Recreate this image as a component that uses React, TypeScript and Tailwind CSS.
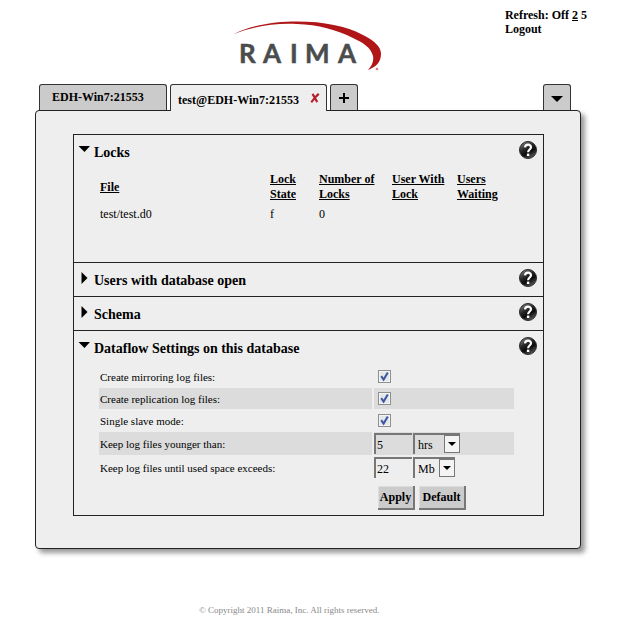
import { useState, type ReactNode } from "react";

function Logo() {
  return (
    <svg width="150" height="52" viewBox="0 0 150 52" role="img" aria-label="Raima">
      <path
        d="M1 14.500C22 4 45 1.500 65 1.500C92 1.500 114 6 131 15C143 21 149 27 149 34C149 42 144 47 136 50C140 46 142 41 141 36C139 28 132 23 121 18C105 10 86 4.500 65 4C42 3 22 6 1 14.500Z"
        fill="#b01518"
      />
      <circle cx="145" cy="49" r="1.300" fill="#d98080" />
      <g
        fill="#4a4c4e"
        stroke="#4a4c4e"
        strokeWidth="0.500"
        fontFamily="Lato, sans-serif"
        fontWeight="700"
        fontSize="26"
      >
        <text x="7" y="43">R</text>
        <text x="31" y="43">A</text>
        <text x="58" y="43">I</text>
        <text x="73" y="43">M</text>
        <text x="106" y="43">A</text>
      </g>
    </svg>
  );
}

function HelpIcon() {
  return (
    <svg width="18" height="18" viewBox="0 0 18 18" aria-hidden="true">
      <defs>
        <linearGradient id="ball" x1="0" y1="0" x2="0.600" y2="1">
          <stop offset="0" stopColor="#999" />
          <stop offset="0.450" stopColor="#2a2a2a" />
          <stop offset="0.700" stopColor="#0a0a0a" />
          <stop offset="1" stopColor="#555" />
        </linearGradient>
      </defs>
      <circle cx="9" cy="9" r="8.500" fill="url(#ball)" stroke="#2a2a2a" />
      <path d="M6 6.400C6.200 2.800 12.100 2.800 12 6.200C11.900 8.600 9.200 8.500 9.100 11.200" fill="none" stroke="#fff" strokeWidth="2.200" />
      <rect x="7.900" y="12.600" width="2.400" height="2.400" fill="#fff" />
    </svg>
  );
}

function Section({
  title,
  initiallyOpen = false,
  children,
}: {
  title: string;
  initiallyOpen?: boolean;
  children?: ReactNode;
}) {
  const [open, setOpen] = useState(initiallyOpen);
  return (
    <section className="border-t border-[#222] first:border-t-0">
      <div className="flex h-[33px] items-start justify-between pr-1.5 pl-1">
        <h2>
          <button
            type="button"
            aria-expanded={open}
            onClick={() => setOpen(!open)}
            className="flex items-start text-sm leading-5 font-bold"
          >
            <svg className="mt-2 mr-1 shrink-0" width="12" height="14" viewBox="0 0 12 14" aria-hidden="true">
              {open ? <path d="M0.500 3H12L6.500 9Z" /> : <path d="M3.500 1V13L9.500 7Z" />}
            </svg>
            <span className="pt-2">{title}</span>
          </button>
        </h2>
        <button type="button" aria-label={`Help: ${title}`} className="mt-1.5">
          <HelpIcon />
        </button>
      </div>
      {open && children}
    </section>
  );
}

function Tick({ id }: { id: string }) {
  return (
    <span className="relative ml-1 block h-[13px] w-[13px]">
      <input
        id={id}
        type="checkbox"
        defaultChecked
        className="peer block h-[13px] w-[13px] appearance-none border border-[#8e8f8f] bg-[#e4e7ea] shadow-[inset_0_0_0_1px_#f4f4f4]"
      />
      <svg className="pointer-events-none absolute inset-0 hidden peer-checked:block" width="13" height="13" viewBox="0 0 13 13" aria-hidden="true">
        <path d="M3.200 6.200L5.600 9.600L9.800 2.600" fill="none" stroke="#3c56a0" strokeWidth="2" />
      </svg>
    </span>
  );
}

function Amount({ id, value, unit, units, selectWidth }: { id: string; value: string; unit: string; units: string[]; selectWidth: string }) {
  return (
    <div className="flex h-[21px] gap-px">
      <input
        id={id}
        defaultValue={value}
        className="w-[38px] border-t-2 border-l-2 border-[#777] bg-transparent pl-px text-[12px]"
      />
      <span className={`relative ${selectWidth}`}>
        <select
          aria-label="Unit"
          defaultValue={unit}
          className="h-full w-full appearance-none border-t-2 border-l-2 border-[#777] bg-transparent pl-[3px] text-[12px]"
        >
          {units.map((u) => (
            <option key={u}>{u}</option>
          ))}
        </select>
        <span className="pointer-events-none absolute top-[2px] right-0 flex h-[18px] w-4 items-center justify-center border border-[#777] bg-[#f4f4f4]">
          <svg width="8" height="4" viewBox="0 0 8 4" aria-hidden="true">
            <path d="M0 0H8L4 4Z" />
          </svg>
        </span>
      </span>
    </div>
  );
}

function Setting({ id, label, shaded = false, tall = false, children }: { id: string; label: string; shaded?: boolean; tall?: boolean; children: ReactNode }) {
  const shade = shaded ? "bg-[#dcdcdc]" : "";
  return (
    <tr className={tall ? "h-[23px]" : "h-[21px]"}>
      <th scope="row" className={`p-0 pl-px text-left align-middle font-normal ${shade}`}>
        <label htmlFor={id}>{label}</label>
      </th>
      <td className={`p-0 align-middle ${shade}`}>{children}</td>
    </tr>
  );
}

const columns = ["File", "Lock State", "Number of Locks", "User With Lock", "Users Waiting"];
const locks = [["test/test.d0", "f", "0", "", ""]];

const tab = "rounded-t-[3px] border border-b-0 border-[#333] text-[12px] font-bold";
const action =
  "h-6 border-r-2 border-b-2 border-[#777] bg-[#cbcbcb] text-[12px] font-bold shadow-[inset_1px_1px_0_#ddd]";

export default function App() {
  return (
    <div className="bg-white font-['Liberation_Serif','Times_New_Roman',serif] text-black">
      <header className="grid h-21 grid-cols-[1fr_auto_1fr] items-start pr-9 pl-[27px]">
        <div className="col-start-2 pt-5">
          <Logo />
        </div>
        <nav className="justify-self-end pt-2 text-[12px] leading-[14px] font-bold whitespace-nowrap">
          <div>
            Refresh: <a href="#off">Off</a> <a href="#2" className="underline">2</a> <a href="#5">5</a>
          </div>
          <a href="#logout">Logout</a>
        </nav>
      </header>

      <div className="pr-[42px] pl-[35px]">
        <div className="flex h-[26px] items-stretch pr-2.5 pl-1">
          <button type="button" className={`${tab} mr-[3px] w-32 bg-[#cbcbcb] pb-0.5 pl-3 text-left`}>
            EDH-Win7:21553
          </button>
          <div className={`${tab} relative z-10 mr-[3px] -mb-px flex w-[157px] items-center justify-between bg-[#eee] pt-1 pr-1.5 pl-[7px]`}>
            <button type="button">test@EDH-Win7:21553</button>
            <button type="button" aria-label="Close tab" className="pb-1">
              <svg width="10" height="10" viewBox="0 0 10 10" aria-hidden="true">
                <path d="M2.500 0.800C4 3 5 6 7.300 9M8.800 0.800C6 3 4 6 1.200 9.200" fill="none" stroke="#b5202a" strokeWidth="2.200" />
              </svg>
            </button>
          </div>
          <button type="button" aria-label="New tab" className={`${tab} flex w-7 items-center justify-center bg-[#cbcbcb]`}>
            <svg width="10" height="10" viewBox="0 0 10 10" aria-hidden="true">
              <path d="M5 0V10M0 5H10" stroke="#000" strokeWidth="2" />
            </svg>
          </button>
          <button type="button" aria-label="All tabs" className={`${tab} ml-auto flex w-7 items-center justify-center bg-[#cbcbcb] pt-0.5`}>
            <svg width="12" height="6" viewBox="0 0 12 6" aria-hidden="true">
              <path d="M0 0H12L6 6Z" />
            </svg>
          </button>
        </div>

        <main className="rounded-[4px] border border-[#222] bg-[#eee] pt-[23px] pr-9 pb-8 pl-[37px] shadow-[4px_4px_5px_#999]">
          <div className="border border-[#222] text-[12px]">
            <Section title="Locks" initiallyOpen>
              <div className="pt-1 pr-6 pb-9 pl-[26px]">
                <table className="w-full table-fixed border-collapse text-left">
                  <colgroup>
                    <col className="w-[170px]" />
                    <col className="w-[49px]" />
                    <col className="w-[73px]" />
                    <col className="w-[65px]" />
                    <col />
                  </colgroup>
                  <thead>
                    <tr className="leading-[15px]">
                      {columns.map((c) => (
                        <th key={c} scope="col" className="p-0 pr-1.5 align-middle underline">
                          {c}
                        </th>
                      ))}
                    </tr>
                  </thead>
                  <tbody>
                    {locks.map((row) => (
                      <tr key={row[0]} className="h-6">
                        {row.map((cell, i) => (
                          <td key={i} className="p-0 align-middle">
                            {cell}
                          </td>
                        ))}
                      </tr>
                    ))}
                  </tbody>
                </table>
              </div>
            </Section>
            <Section title="Users with database open" />
            <Section title="Schema" />
            <Section title="Dataflow Settings on this database" initiallyOpen>
              <form className="pt-px pr-[27px] pb-[5px] pl-[23px]" onSubmit={(e) => e.preventDefault()}>
                <table className="w-full table-fixed border-separate border-spacing-x-[2px] border-spacing-y-px leading-4">
                  <colgroup>
                    <col className="w-[273px]" />
                    <col />
                  </colgroup>
                  <tbody className="text-[11px]">
                    <Setting id="mirroring" label="Create mirroring log files:">
                      <Tick id="mirroring" />
                    </Setting>
                    <Setting id="replication" label="Create replication log files:" shaded>
                      <Tick id="replication" />
                    </Setting>
                    <Setting id="slave" label="Single slave mode:">
                      <Tick id="slave" />
                    </Setting>
                    <Setting id="age" label="Keep log files younger than:" shaded tall>
                      <Amount id="age" value="5" unit="hrs" units={["hrs", "days"]} selectWidth="w-[47px]" />
                    </Setting>
                    <Setting id="space" label="Keep log files until used space exceeds:" tall>
                      <Amount id="space" value="22" unit="Mb" units={["Mb", "Gb"]} selectWidth="w-[42px]" />
                    </Setting>
                  </tbody>
                </table>
                <div className="flex gap-1 pt-1.5 pl-[281px]">
                  <button type="submit" className={`${action} w-[37px]`}>
                    Apply
                  </button>
                  <button type="reset" className={`${action} w-[47px]`}>
                    Default
                  </button>
                </div>
              </form>
            </Section>
          </div>
        </main>
      </div>

      <footer className="pt-[53px] pb-4 pl-[199px] text-[9px] leading-4 text-[#888]">
        © Copyright 2011 Raima, Inc. All rights reserved.
      </footer>
    </div>
  );
}
